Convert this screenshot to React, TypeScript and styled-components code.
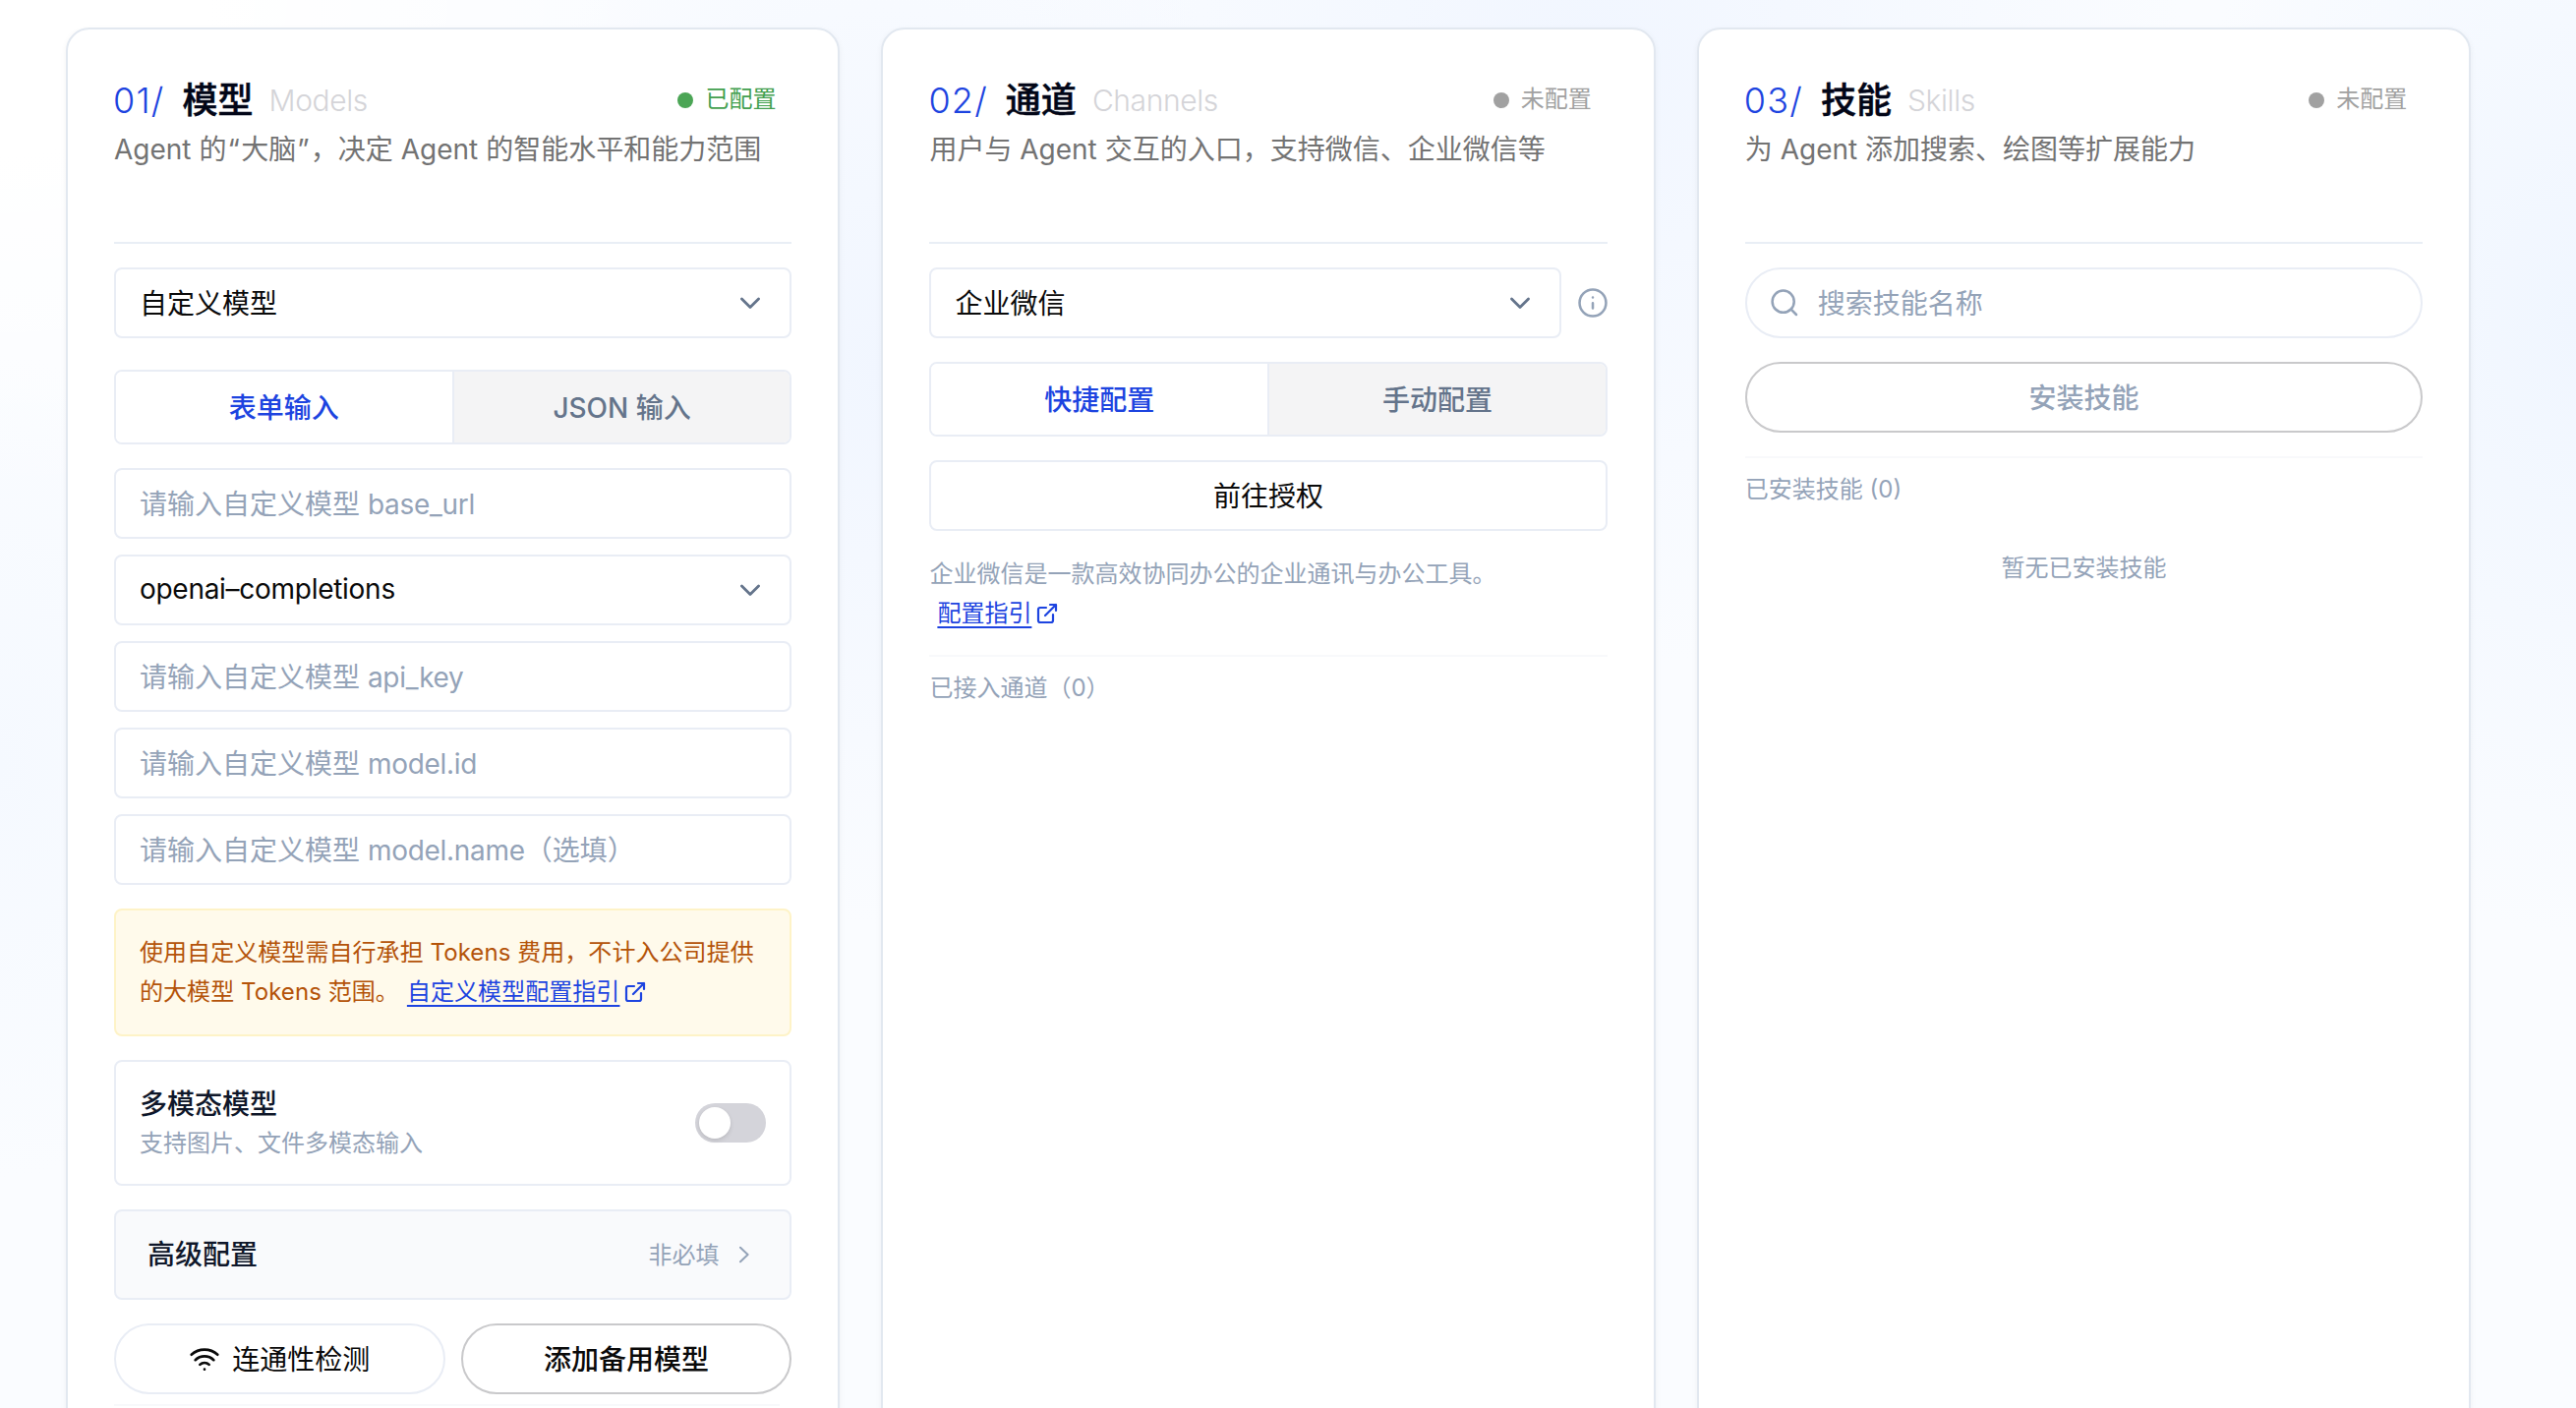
import React from "react";
import styled, { createGlobalStyle, css } from "styled-components";

const Global = createGlobalStyle`
  *, *::before, *::after { box-sizing: border-box; }
  html, body { margin: 0; padding: 0; height: 100%; overflow: hidden; }
  body {
    font-family: Inter, "Noto Sans CJK SC", sans-serif;
    font-size: 28px;
    color: #0a0a0a;
    -webkit-font-smoothing: antialiased;
  }
`;

const Page = styled.main`
  width: 2620px;
  height: 1432px;
  overflow: hidden;
  padding: 28px 0 0 67px;
  display: flex;
  align-items: flex-start;
  gap: 42px;
  background:
    radial-gradient(ellipse 420px 620px at 2620px 330px, #f0f6ff 0%, rgba(240, 246, 255, 0) 100%),
    radial-gradient(ellipse 600px 620px at 1620px 60px, #f1f6ff 0%, rgba(241, 246, 255, 0) 100%),
    radial-gradient(ellipse 420px 560px at 900px 380px, #f1f6ff 0%, rgba(241, 246, 255, 0) 100%),
    radial-gradient(ellipse 260px 420px at 0px 780px, #f5f9ff 0%, rgba(245, 249, 255, 0) 100%),
    radial-gradient(ellipse 700px 520px at 0px 0px, #ffffff 30%, rgba(255, 255, 255, 0) 100%),
    #fafcff;
`;

const Card = styled.section`
  width: 787.4px;
  height: 1500px;
  flex: none;
  display: flex;
  flex-direction: column;
  padding: 48px 47px 0;
  background: #fff;
  border: 2px solid #e2e8f0;
  border-radius: 24px;
  box-shadow: 0 2px 6px rgba(15, 23, 42, 0.05);
`;

const CardHead = styled.header`
  height: 170px;
  flex: none;
  border-bottom: 2px solid #e9eef5;
  margin-bottom: 24px;
`;

const TitleRow = styled.div`
  height: 48px;
  display: flex;
  align-items: center;
  white-space: nowrap;
`;

const Index = styled.span`
  margin: 0 18px 0 -1px;
  font-size: 36px;
  font-weight: 350;
  letter-spacing: 1.2px;
  color: #1d44e0;
`;

const Title = styled.h2`
  margin: 0 16px 0 0;
  font-size: 36px;
  line-height: 48px;
  font-weight: 500;
  -webkit-text-stroke: 0.5px #020617;
  color: #020617;
`;

const English = styled.span`
  font-size: 30px;
  font-weight: 300;
  letter-spacing: -0.4px;
  color: #d4d4d8;
`;

const Status = styled.span<{ $on?: boolean }>`
  margin-left: auto;
  margin-right: 16px;
  display: flex;
  align-items: center;
  gap: 12px;
  font-size: 24px;
  line-height: 32px;
  color: ${(p) => (p.$on ? "#43a04f" : "#a1a1a1")};
  &::before {
    content: "";
    width: 16px;
    height: 16px;
    border-radius: 50%;
    background: ${(p) => (p.$on ? "#4ba555" : "#a1a1a1")};
  }
  span { padding-bottom: 2px; }
`;

const Desc = styled.p`
  margin: 4px 0 0;
  font-size: 28px;
  line-height: 44px;
  color: #737373;
  white-space: nowrap;
`;

const Quote = styled.span`
  padding-left: 1.2px;
  padding-right: 1.2px;
`;

const Latin = styled.span`
  letter-spacing: -0.28px;
`;

const box = css`
  border: 2px solid #e9edf5;
  border-radius: 8px;
`;

const Field = styled.div<{ $muted?: boolean; $pill?: boolean; $gap?: number }>`
  ${box}
  height: 72px;
  flex: none;
  min-width: 0;
  padding: 0 24px;
  margin-bottom: ${(p) => p.$gap ?? 16}px;
  display: flex;
  align-items: center;
  justify-content: space-between;
  white-space: nowrap;
  color: ${(p) => (p.$muted ? "#94a3b8" : "#0a0a0a")};
  & > span { padding-bottom: 3px; }
  ${(p) =>
    p.$pill &&
    css`
      border-radius: 36px;
      justify-content: flex-start;
      gap: 18px;
      padding-left: 22px;
    `}
`;

const FieldRow = styled.div`
  display: flex;
  align-items: center;
  margin-bottom: 24px;
  & > div { flex: 1; }
  & > svg { margin: 0 -1px 0 16px; flex: none; }
`;

const Tabs = styled.div`
  ${box}
  height: 76px;
  flex: none;
  display: flex;
  overflow: hidden;
  margin-bottom: 24px;
`;

const Tab = styled.button<{ $active?: boolean }>`
  flex: 1;
  border: 0;
  padding: 0 0 3px;
  font: inherit;
  font-weight: 500;
  background: ${(p) => (p.$active ? "#fff" : "#f4f4f5")};
  color: ${(p) => (p.$active ? "#1d44e0" : "#64748b")};
  & + & { border-left: 2px solid #e9edf5; }
`;

const Notice = styled.div`
  height: 130px;
  flex: none;
  margin: 8px 0 24px;
  padding: 23px 24px;
  border: 2px solid #fef3c7;
  border-radius: 8px;
  background: #fffaeb;
  font-size: 24px;
  line-height: 40px;
  letter-spacing: 0.06px;
  color: #b45309;
  white-space: nowrap;
`;

const GuideLink = styled.a`
  display: inline-flex;
  align-items: center;
  gap: 4px;
  height: 38px;
  line-height: 38px;
  margin-left: 8px;
  color: #1d44e0;
  span {
    text-decoration: underline;
    text-decoration-thickness: 2px;
    text-underline-offset: 5px;
  }
`;

const SwitchRow = styled.div`
  ${box}
  height: 128px;
  flex: none;
  margin-bottom: 24px;
  padding: 0 24px;
  display: flex;
  align-items: center;
  justify-content: space-between;
`;

const SwitchText = styled.div`
  padding-top: 2px;
`;

const Strong = styled.div`
  font-weight: 500;
  line-height: 40px;
  color: #0f172a;
`;

const Small = styled.div<{ $top?: number }>`
  margin-top: ${(p) => p.$top ?? 0}px;
  font-size: 24px;
  line-height: 40px;
  color: #94a3b8;
  white-space: nowrap;
`;

const Switch = styled.span`
  width: 72px;
  height: 40px;
  padding: 4px;
  border-radius: 20px;
  background: #d4d4da;
  &::before {
    content: "";
    display: block;
    width: 32px;
    height: 32px;
    border-radius: 50%;
    background: #fff;
    box-shadow: 0 2px 4px rgba(0, 0, 0, 0.12);
  }
`;

const Advanced = styled.div`
  ${box}
  height: 92px;
  flex: none;
  margin-bottom: 24px;
  padding: 0 40px 0 32px;
  display: flex;
  align-items: center;
  justify-content: space-between;
  background: #f9fafc;
`;

const More = styled.span`
  display: flex;
  align-items: center;
  gap: 20px;
  font-size: 24px;
  color: #94a3b8;
  span { padding-bottom: 4px; }
`;

const ButtonRow = styled.div`
  display: grid;
  grid-template-columns: 1fr 1fr;
  gap: 16px;
  margin-bottom: 10px;
`;

const Button = styled.button<{ $square?: boolean; $strong?: boolean; $muted?: boolean }>`
  height: 72px;
  flex: none;
  padding: 0;
  display: flex;
  align-items: center;
  justify-content: center;
  gap: 12px;
  font: inherit;
  font-weight: ${(p) => (p.$strong ? 500 : 400)};
  color: ${(p) => (p.$muted ? "#94a3b8" : "#0a0a0a")};
  background: #fff;
  border: 2px solid ${(p) => (p.$strong ? "#c9c9cb" : "#e9edf5")};
  border-radius: ${(p) => (p.$square ? 8 : 36)}px;
  span { padding-bottom: 3px; }
`;

const Rule = styled.hr<{ $top?: number; $short?: boolean }>`
  width: ${(p) => (p.$short ? "677px" : "100%")};
  height: 2px;
  flex: none;
  border: 0;
  margin: ${(p) => p.$top ?? 0}px 0 12px;
  background: #f8f9fb;
`;

const Empty = styled(Small)`
  text-align: center;
`;

type SvgProps = { size: number; w?: number; color?: string; children: React.ReactNode };

const Svg = ({ size, w = 2, children, color = "currentColor" }: SvgProps) => (
  <svg width={size} height={size} viewBox="0 0 24 24" fill="none" stroke={color} strokeWidth={w} strokeLinecap="round" strokeLinejoin="round">
    {children}
  </svg>
);

const Chevron = () => (
  <Svg size={32} color="#64748b" w={2.1}>
    <path d="m5.6 9 6.4 6.3L18.4 9" />
  </Svg>
);

const ExternalIcon = () => (
  <Svg size={24} w={2.2}>
    <path d="M15 3h6v6M10 14 21 3M18 13v6a2 2 0 0 1-2 2H5a2 2 0 0 1-2-2V8a2 2 0 0 1 2-2h6" />
  </Svg>
);

const InfoIcon = () => (
  <Svg size={32} color="#94a3b8" w={1.9}>
    <circle cx="12" cy="12" r="10.1" />
    <path d="M12 12.2v4M12 7.9h.01" />
  </Svg>
);

const SearchIcon = () => (
  <Svg size={32} w={1.9}>
    <circle cx="11" cy="11" r="8.3" />
    <path d="m17.2 17.2 3.8 3.8" />
  </Svg>
);

const WifiIcon = () => (
  <Svg size={32}>
    <path d="M2 8.8a15 15 0 0 1 20 0M5 12.9a10 10 0 0 1 14 0M8.5 16.4a5 5 0 0 1 7 0M12 20h.01" />
  </Svg>
);

type HeadProps = { no: string; title: string; en: string; on?: boolean; children: React.ReactNode };

const Head = ({ no, title, en, on, children }: HeadProps) => (
  <CardHead>
    <TitleRow>
      <Index>{no}/</Index>
      <Title>{title}</Title>
      <English>{en}</English>
      <Status $on={on}>
        <span>{on ? "已配置" : "未配置"}</span>
      </Status>
    </TitleRow>
    <Desc>{children}</Desc>
  </CardHead>
);

const Guide = ({ text }: { text: string }) => (
  <GuideLink>
    <span>{text}</span>
    <ExternalIcon />
  </GuideLink>
);

const ModelInput = ({ name, suffix }: { name: string; suffix?: string }) => (
  <Field $muted>
    <span>
      请输入自定义模型 <Latin>{name}</Latin>
      {suffix}
    </span>
  </Field>
);

export default function App() {
  return (
    <>
      <Global />
      <Page>
        <Card>
          <Head no="01" title="模型" en="Models" on>
            Agent 的<Quote>“</Quote>大脑<Quote>”</Quote>，决定 Agent 的智能水平和能力范围
          </Head>
          <Field $gap={32}>
            <span>自定义模型</span>
            <Chevron />
          </Field>
          <Tabs>
            <Tab $active>表单输入</Tab>
            <Tab>JSON 输入</Tab>
          </Tabs>
          <ModelInput name="base_url" />
          <Field>
            <Latin>openai–completions</Latin>
            <Chevron />
          </Field>
          <ModelInput name="api_key" />
          <ModelInput name="model.id" />
          <ModelInput name="model.name" suffix="（选填）" />
          <Notice>
            使用自定义模型需自行承担 Tokens 费用，不计入公司提供
            <br />
            的大模型 Tokens 范围。
            <Guide text="自定义模型配置指引" />
          </Notice>
          <SwitchRow>
            <SwitchText>
              <Strong>多模态模型</Strong>
              <Small>支持图片、文件多模态输入</Small>
            </SwitchText>
            <Switch />
          </SwitchRow>
          <Advanced>
            <Strong>高级配置</Strong>
            <More>
              <span>非必填</span>
              <svg width="12" height="18" viewBox="0 0 12 18" fill="none" stroke="currentColor" strokeWidth="2" strokeLinecap="round" strokeLinejoin="round">
                <path d="m2 1.8 7.6 7.2-7.6 7.2" />
              </svg>
            </More>
          </Advanced>
          <ButtonRow>
            <Button>
              <WifiIcon />
              <span>连通性检测</span>
            </Button>
            <Button $strong>
              <span>添加备用模型</span>
            </Button>
          </ButtonRow>
          <Rule $short />
        </Card>

        <Card>
          <Head no="02" title="通道" en="Channels">
            用户与 Agent 交互的入口，支持微信、企业微信等
          </Head>
          <FieldRow>
            <Field $gap={0}>
              <span>企业微信</span>
              <Chevron />
            </Field>
            <InfoIcon />
          </FieldRow>
          <Tabs>
            <Tab $active>快捷配置</Tab>
            <Tab>手动配置</Tab>
          </Tabs>
          <Button $square>
            <span>前往授权</span>
          </Button>
          <Small $top={24}>
            企业微信是一款高效协同办公的企业通讯与办公工具。
            <br />
            <Guide text="配置指引" />
          </Small>
          <Rule $top={22} />
          <Small>已接入通道（0）</Small>
        </Card>

        <Card>
          <Head no="03" title="技能" en="Skills">
            为 Agent 添加搜索、绘图等扩展能力
          </Head>
          <Field $muted $pill $gap={24}>
            <SearchIcon />
            <span>搜索技能名称</span>
          </Field>
          <Button $strong $muted>
            <span>安装技能</span>
          </Button>
          <Rule $top={24} />
          <Small>已安装技能 (0)</Small>
          <Empty $top={40}>暂无已安装技能</Empty>
        </Card>
      </Page>
    </>
  );
}
